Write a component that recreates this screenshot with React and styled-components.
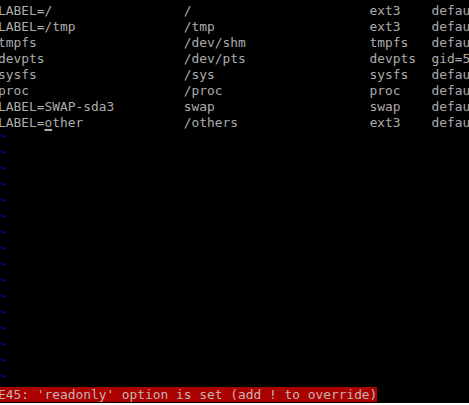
import React from "react";
import styled, { createGlobalStyle } from "styled-components";

const GlobalStyle = createGlobalStyle`
  html, body {
    margin: 0;
    padding: 0;
    background: #fff;
  }
`;

const Screen = styled.div`
  width: 469px;
  height: 403px;
  box-sizing: border-box;
  padding-top: 3px;
  background: #000;
  overflow: hidden;
  display: flex;
  flex-direction: column;
  font-family: "DejaVu Sans Mono", "Liberation Mono", monospace;
  font-size: 12.87px;
`;

const Line = styled.div`
  height: 16px;
  line-height: 16px;
  margin-left: -2px;
  white-space: pre;
  color: #acacac;
  flex-shrink: 0;
`;

const Cursor = styled.span`
  text-decoration: underline;
  text-underline-offset: 2px;
  text-decoration-thickness: 2px;
`;

const Tilde = styled.span`
  display: inline-block;
  color: #0000b0;
  transform: translateY(-3px);
  margin-left: 1px;
`;

const ErrorMsg = styled.span`
  background: #aa0000;
  color: #c4b4b4;
`;

const pad = (s, n) => s.padEnd(n, " ");

const entries = [
  ["LABEL=/", "/", "ext3", "defaults        1 1"],
  ["LABEL=/tmp", "/tmp", "ext3", "defaults        1 2"],
  ["tmpfs", "/dev/shm", "tmpfs", "defaults        0 0"],
  ["devpts", "/dev/pts", "devpts", "gid=5,mode=620  0 0"],
  ["sysfs", "/sys", "sysfs", "defaults        0 0"],
  ["proc", "/proc", "proc", "defaults        0 0"],
  ["LABEL=SWAP-sda3", "swap", "swap", "defaults        0 0"],
];

const App = () => {
  const tildes = Array.from({ length: 16 });
  return (
    <>
      <GlobalStyle />
      <Screen>
        {entries.map((e, i) => (
          <Line key={i}>
            {pad(e[0], 24) + pad(e[1], 24) + pad(e[2], 8) + e[3]}
          </Line>
        ))}
        <Line>
          {"LABEL="}
          <Cursor>o</Cursor>
          {"ther" + " ".repeat(13) + pad("/others", 24) + pad("ext3", 8) + "defaults        1 2"}
        </Line>
        {tildes.map((_, i) => (
          <Line key={"t" + i}>
            <Tilde>~</Tilde>
          </Line>
        ))}
        <Line>
          <ErrorMsg>E45: 'readonly' option is set (add ! to override)</ErrorMsg>
        </Line>
      </Screen>
    </>
  );
};

export default App;
